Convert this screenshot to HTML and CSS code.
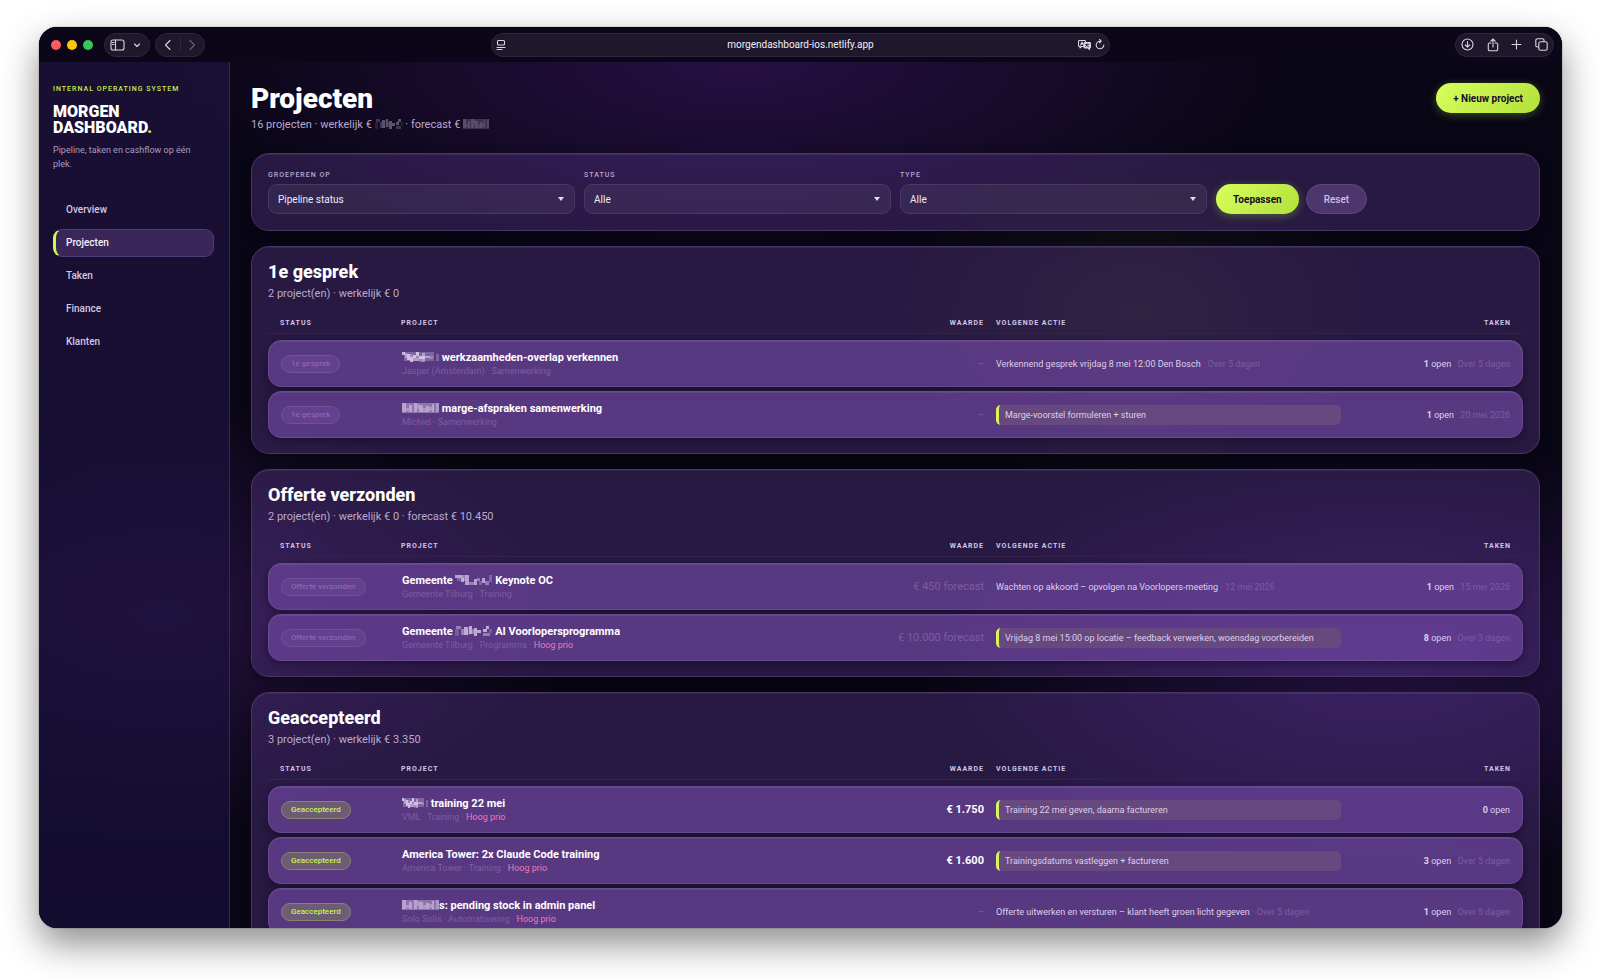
FILE: index.html
```
<!DOCTYPE html>
<html lang="nl">

<head>
    <meta charset="utf-8">
    <title>Morgen Dashboard</title>
    <link rel="stylesheet" href="styles.css">
</head>

<body>
    <!-- shared mosaic blocks for masked names and amounts -->
    <svg class="defs" width="0" height="0" aria-hidden="true">
        <symbol id="mask_a" viewBox="0 0 37 10" preserveAspectRatio="none">
            <path opacity=".25" d="M2 0h30v9h-30z" />
            <path opacity=".7" d="M0 0h3v3h-3zM5 2h3v6h-3zM11 3h3v3h-3zM14 0h3v4h-3zM17 4h6v3h-6zM8 5h3v5h-3z" />
            <path opacity=".45" d="M3 1h2v5h-2zM11 6h6v3h-6zM20 1h3v3h-3zM20 7h3v3h-3zM23 4h5v2h-5z" />
            <path opacity=".25" d="M8 2h3v3h-3zM14 4h3v2h-3zM17 7h3v3h-3zM28 4h3v3h-3zM34 2h3v7h-3z" />
        </symbol>
        <symbol id="mask_b" viewBox="0 0 37 10" preserveAspectRatio="none">
            <path opacity=".35" d="M0 0h37v10h-37z" />
            <path opacity=".4" d="M0 0h4v9h-4zM7 2h3v7h-3zM12 0h3v9h-3zM17 2h4v7h-4zM24 3h3v6h-3zM30 1h2v8h-2z" />
            <path opacity=".3" d="M4 5h3v3h-3zM15 1h2v5h-2zM21 5h3v4h-3zM27 4h3v4h-3zM34 0h3v9h-3z" />
        </symbol>
        <symbol id="mask_c" viewBox="0 0 37 10" preserveAspectRatio="none">
            <path opacity=".6" d="M0 0h8v3h-8zM6 3h3v4h-3zM10 0h4v10h-4zM19 4h3v6h-3zM27 3h3v5h-3z" />
            <path opacity=".4" d="M8 0h2v6h-2zM14 7h5v3h-5zM22 3h3v3h-3zM30 6h4v4h-4z" />
            <path opacity=".25" d="M2 3h4v3h-4zM24 6h3v4h-3zM34 0h3v7h-3z" />
        </symbol>
        <symbol id="mask_d" viewBox="0 0 37 10" preserveAspectRatio="none">
            <path opacity=".65" d="M9 1h4v8h-4zM14 0h3v8h-3zM19 2h3v8h-3zM22 4h4v3h-4zM28 3h4v3h-4zM31 0h3v3h-3z" />
            <path opacity=".4" d="M1 0h5v3h-5zM6 3h3v6h-3zM17 3h2v5h-2zM28 7h7v3h-7z" />
            <path opacity=".2" d="M0 3h4v7h-4zM13 1h1v8h-1zM34 3h3v4h-3z" />
        </symbol>
    </svg>

    <div class="window">
        <div class="toolbar">
            <div class="toolbar_left">
                <div class="lights"><span class="light red"></span><span class="light yellow"></span><span class="light green"></span></div>
                <div class="pill">
                    <button class="icon" aria-label="Zijbalk"><svg width="15" height="12" viewBox="0 0 15 12"><rect x="1" y="1" width="13" height="10" rx="2" /><path d="M5.500 1v10M2.500 3.500h1.500M2.500 5.500h1.500" /></svg></button>
                    <button class="icon" aria-label="Tabgroepen"><svg width="8" height="8" viewBox="0 0 8 8"><path d="M1.500 3l2.500 2.500 2.500-2.500" /></svg></button>
                </div>
                <div class="pill nav_pill">
                    <button class="icon" aria-label="Terug"><svg width="8" height="12" viewBox="0 0 8 12"><path d="M6 1.500L1.500 6 6 10.500" /></svg></button>
                    <span class="divider"></span>
                    <button class="icon dim" aria-label="Vooruit"><svg width="8" height="12" viewBox="0 0 8 12"><path d="M2 1.500L6.500 6 2 10.500" /></svg></button>
                </div>
            </div>
            <div class="pill address">
                <svg width="10" height="12" viewBox="0 0 10 12"><rect x="1.500" y="1.500" width="7" height="4.500" rx="1" /><path d="M1 8.500h8M1 10.500h5" /></svg>
                <span class="url">morgendashboard-ios.netlify.app</span>
                <button class="icon" aria-label="Vertaal"><svg width="13" height="10" viewBox="0 0 13 10"><path d="M7 6.500H3.500L2 8V6.500H1.500a1 1 0 0 1-1-1v-4a1 1 0 0 1 1-1h5a1 1 0 0 1 1 1M2.500 5L4 2l1.500 3M3 4h2" /><path class="solid" d="M7 2.500h4.500a1 1 0 0 1 1 1v3.500a1 1 0 0 1-1 1v1.500L10 8H7a1 1 0 0 1-1-1V3.500a1 1 0 0 1 1-1z" /><path class="cut" d="M7.500 4.500h3.500M9.200 3.800v.7c0 1-.7 1.700-1.500 2M8.200 5c.5 1 1.200 1.500 2.300 1.700" /></svg></button>
                <button class="icon" aria-label="Herlaad"><svg width="10" height="11" viewBox="0 0 10 11"><path d="M8.800 6A3.800 3.800 0 1 1 5 2.200h1M4.500.5L6.200 2.200 4.500 4" /></svg></button>
            </div>
            <div class="toolbar_right">
                <div class="pill tools">
                    <button class="icon" aria-label="Downloads"><svg width="13" height="13" viewBox="0 0 13 13"><circle cx="6.500" cy="6.500" r="5.500" /><path d="M6.500 3.500v5.500M4.300 7l2.200 2.200L8.700 7" /></svg></button>
                    <button class="icon" aria-label="Deel"><svg width="12" height="14" viewBox="0 0 12 14"><path d="M4 5H2.500a1.200 1.200 0 0 0-1.200 1.200v5a1.500 1.500 0 0 0 1.500 1.500h6.400a1.500 1.500 0 0 0 1.500-1.500v-5A1.200 1.200 0 0 0 9.500 5H8M6 9V1.200M3.800 3.200L6 1l2.200 2.200" /></svg></button>
                    <button class="icon" aria-label="Nieuw tabblad"><svg width="11" height="11" viewBox="0 0 11 11"><path d="M5.500 1v9M1 5.500h9" /></svg></button>
                    <button class="icon" aria-label="Tabbladen"><svg width="13" height="13" viewBox="0 0 13 13"><rect x="3.800" y="3.800" width="8.400" height="8.400" rx="1.800" /><path d="M3.500 9H2.300A1.500 1.500 0 0 1 .8 7.500V2.300A1.500 1.500 0 0 1 2.300.8h5.200A1.500 1.500 0 0 1 9 2.300V3.500" /></svg></button>
                </div>
            </div>
        </div>

        <div class="app">
            <aside class="sidebar">
                <div class="eyebrow">INTERNAL OPERATING SYSTEM</div>
                <div class="brand">MORGEN<br>DASHBOARD<span class="dot">.</span></div>
                <p class="tagline">Pipeline, taken en cashflow op één plek.</p>
                <nav class="menu">
                    <a href="#">Overview</a>
                    <a href="#" class="active">Projecten</a>
                    <a href="#">Taken</a>
                    <a href="#">Finance</a>
                    <a href="#">Klanten</a>
                </nav>
            </aside>

            <main class="main">
                <header class="page_header">
                    <div>
                        <h1>Projecten</h1>
                        <p class="subtitle">16 projecten · werkelijk € <svg class="mask faint"><use href="#mask_d" /></svg> · forecast € <svg class="mask faint short"><use href="#mask_b" /></svg></p>
                    </div>
                    <button class="button primary">+ Nieuw project</button>
                </header>

                <form class="panel filters">
                    <div class="field">
                        <label for="group">GROEPEREN OP</label>
                        <select id="group"><option>Pipeline status</option></select>
                    </div>
                    <div class="field">
                        <label for="status">STATUS</label>
                        <select id="status"><option>Alle</option></select>
                    </div>
                    <div class="field">
                        <label for="type">TYPE</label>
                        <select id="type"><option>Alle</option></select>
                    </div>
                    <div class="actions">
                        <button type="button" class="button primary">Toepassen</button>
                        <button type="reset" class="button secondary">Reset</button>
                    </div>
                </form>

                <section class="panel">
                    <h2>1e gesprek</h2>
                    <p class="summary">2 project(en) · werkelijk € 0</p>
                    <table>
                        <thead>
                            <tr><th>STATUS</th><th>PROJECT</th><th class="right">WAARDE</th><th>VOLGENDE ACTIE</th><th class="right">TAKEN</th></tr>
                        </thead>
                        <tbody>
                            <tr>
                                <td><span class="badge">1e gesprek</span></td>
                                <td><div class="name"><svg class="mask"><use href="#mask_a" /></svg> werkzaamheden-overlap verkennen</div><div class="meta">Jasper (Amsterdam) · Samenwerking</div></td>
                                <td class="right muted">–</td>
                                <td>Verkennend gesprek vrijdag 8 mei 12:00 Den Bosch <span class="muted">· Over 5 dagen</span></td>
                                <td class="right"><b>1</b> open <span class="due">Over 5 dagen</span></td>
                            </tr>
                            <tr>
                                <td><span class="badge">1e gesprek</span></td>
                                <td><div class="name"><svg class="mask"><use href="#mask_b" /></svg> marge-afspraken samenwerking</div><div class="meta">Michiel · Samenwerking</div></td>
                                <td class="right muted">–</td>
                                <td><div class="next">Marge-voorstel formuleren + sturen</div></td>
                                <td class="right"><b>1</b> open <span class="due">20 mei 2026</span></td>
                            </tr>
                        </tbody>
                    </table>
                </section>

                <section class="panel">
                    <h2>Offerte verzonden</h2>
                    <p class="summary">2 project(en) · werkelijk € 0 · forecast € 10.450</p>
                    <table>
                        <thead>
                            <tr><th>STATUS</th><th>PROJECT</th><th class="right">WAARDE</th><th>VOLGENDE ACTIE</th><th class="right">TAKEN</th></tr>
                        </thead>
                        <tbody>
                            <tr>
                                <td><span class="badge">Offerte verzonden</span></td>
                                <td><div class="name">Gemeente <svg class="mask"><use href="#mask_c" /></svg> Keynote OC</div><div class="meta">Gemeente Tilburg · Training</div></td>
                                <td class="right muted forecast">€ 450 forecast</td>
                                <td>Wachten op akkoord – opvolgen na Voorlopers-meeting <span class="muted">· 12 mei 2026</span></td>
                                <td class="right"><b>1</b> open <span class="due">15 mei 2026</span></td>
                            </tr>
                            <tr>
                                <td><span class="badge">Offerte verzonden</span></td>
                                <td><div class="name">Gemeente <svg class="mask"><use href="#mask_d" /></svg> AI Voorlopersprogramma</div><div class="meta">Gemeente Tilburg · Programma · <span class="prio">Hoog prio</span></div></td>
                                <td class="right muted forecast">€ 10.000 forecast</td>
                                <td><div class="next">Vrijdag 8 mei 15:00 op locatie – feedback verwerken, woensdag voorbereiden</div></td>
                                <td class="right"><b>8</b> open <span class="due">Over 3 dagen</span></td>
                            </tr>
                        </tbody>
                    </table>
                </section>

                <section class="panel">
                    <h2>Geaccepteerd</h2>
                    <p class="summary">3 project(en) · werkelijk € 3.350</p>
                    <table>
                        <thead>
                            <tr><th>STATUS</th><th>PROJECT</th><th class="right">WAARDE</th><th>VOLGENDE ACTIE</th><th class="right">TAKEN</th></tr>
                        </thead>
                        <tbody>
                            <tr>
                                <td><span class="badge accepted">Geaccepteerd</span></td>
                                <td><div class="name"><svg class="mask short"><use href="#mask_a" /></svg> training 22 mei</div><div class="meta">VML · Training · <span class="prio">Hoog prio</span></div></td>
                                <td class="right value">€ 1.750</td>
                                <td><div class="next">Training 22 mei geven, daarna factureren</div></td>
                                <td class="right"><b>0</b> open</td>
                            </tr>
                            <tr>
                                <td><span class="badge accepted">Geaccepteerd</span></td>
                                <td><div class="name">America Tower: 2x Claude Code training</div><div class="meta">America Tower · Training · <span class="prio">Hoog prio</span></div></td>
                                <td class="right value">€ 1.600</td>
                                <td><div class="next">Trainingsdatums vastleggen + factureren</div></td>
                                <td class="right"><b>3</b> open <span class="due">Over 5 dagen</span></td>
                            </tr>
                            <tr>
                                <td><span class="badge accepted">Geaccepteerd</span></td>
                                <td><div class="name"><svg class="mask"><use href="#mask_b" /></svg>s: pending stock in admin panel</div><div class="meta">Solo Solis · Automatisering · <span class="prio">Hoog prio</span></div></td>
                                <td class="right muted">–</td>
                                <td>Offerte uitwerken en versturen – klant heeft groen licht gegeven <span class="muted">· Over 5 dagen</span></td>
                                <td class="right"><b>1</b> open <span class="due">Over 5 dagen</span></td>
                            </tr>
                        </tbody>
                    </table>
                </section>
            </main>
        </div>
    </div>
</body>

</html>
```
FILE: styles.css
```
* {
    box-sizing: border-box;
}

body {
    margin: 0;
    padding: 27px 38px 51px 39px;
    height: 100vh;
    overflow: hidden;
    background-color: #ffffff;
    color: #ddd0ec;
    font-family: Roboto, "Liberation Sans", sans-serif;
    font-size: 9px;
    line-height: 14px;
}

h1, h2, p {
    margin: 0;
}

button, select {
    font-family: inherit;
}

.defs {
    display: block;
    position: absolute;
}

.window {
    height: 100%;
    display: flex;
    flex-direction: column;
    overflow: hidden;
    border-radius: 18px;
    background-color: #090615;
    box-shadow: 0 0 1px #000000, 0 16px 36px rgba(0, 0, 0, 0.45);
}

/* browser bar */
.toolbar {
    display: grid;
    grid-template-columns: 452fr 618fr 452fr;
    align-items: center;
    flex: none;
    height: 35px;
    background-color: #0c0718;
}

.toolbar_left {
    display: flex;
    align-items: center;
    padding-left: 12px;
}

.toolbar_right {
    display: flex;
    justify-content: flex-end;
    padding-right: 8px;
}

.lights {
    display: flex;
    gap: 6px;
    margin-right: 11px;
}

.light {
    width: 10px;
    height: 10px;
    border-radius: 50%;
}

.red {
    background-color: #ff5b5f;
}

.yellow {
    background-color: #fdc60a;
}

.green {
    background-color: #34c759;
}

.pill {
    display: flex;
    align-items: center;
    justify-content: space-between;
    height: 24px;
    width: 46px;
    padding: 0 8px 0 5px;
    border: 1px solid #2e263e;
    border-radius: 12px;
    background-color: #1f182d;
}

.pill svg {
    display: block;
    fill: none;
    stroke: #d9d5df;
    stroke-width: 1.1;
    stroke-linecap: round;
    stroke-linejoin: round;
}

.pill .solid {
    fill: #d9d5df;
}

.pill .cut {
    stroke: #1f182d;
    stroke-width: 0.8;
}

.icon {
    padding: 0;
    border: 0;
    background: none;
}

.nav_pill {
    width: 50px;
    margin-left: 5px;
    padding: 0 8px;
}

.divider {
    width: 1px;
    height: 14px;
    background-color: #2e263e;
}

.dim {
    opacity: 0.4;
}

.address {
    width: auto;
    gap: 4px;
    padding: 0 4px;
}

/* left padding balances the second icon on the right */
.url {
    flex: 1;
    padding-left: 17px;
    text-align: center;
    color: #f1eff5;
    font-size: 10px;
}

.tools {
    width: 99px;
    padding: 0 5px;
}

/* page */
.app {
    flex: 1;
    min-height: 0;
    display: flex;
    background-image:
        radial-gradient(ellipse 560px 200px at 46% 0, rgba(78, 30, 130, 0.42), transparent),
        radial-gradient(ellipse 260px 170px at 72% 29%, rgba(110, 120, 40, 0.12), transparent),
        radial-gradient(ellipse 460px 220px at 88% 69%, rgba(110, 50, 190, 0.3), transparent),
        radial-gradient(ellipse 420px 220px at 8% 64%, rgba(110, 50, 170, 0.26), transparent);
}

.sidebar {
    flex: none;
    width: 191px;
    padding: 22px 15px 0 14px;
    border-right: 1px solid #382654;
    background-image: linear-gradient(rgba(34, 20, 68, 0.65), rgba(24, 16, 60, 0.65));
}

.eyebrow {
    color: #c8ee50;
    font-size: 7px;
    font-weight: 500;
    letter-spacing: 1px;
    line-height: 10px;
    white-space: nowrap;
}

.brand {
    margin-top: 10px;
    color: #ffffff;
    font-size: 16px;
    font-weight: 900;
    line-height: 16px;
}

.dot {
    color: #d4ff4f;
}

.tagline {
    margin-top: 7px;
    padding-right: 14px;
    color: #a99bc0;
}

.menu {
    display: flex;
    flex-direction: column;
    gap: 5px;
    margin-top: 25px;
}

.menu a {
    height: 28px;
    padding-left: 12px;
    border: 1px solid transparent;
    border-radius: 9px;
    color: #d3c7e6;
    font-size: 10px;
    font-weight: 500;
    line-height: 26px;
    text-decoration: none;
}

.menu .active {
    padding-left: 10px;
    border-color: #523a73;
    border-left: 3px solid #d0f850;
    background-color: #3b2659;
    color: #f5effc;
}

.main {
    flex: 1;
    min-width: 0;
    overflow: hidden;
    padding: 21px 22px 0 21px;
}

.page_header {
    display: flex;
    justify-content: space-between;
    align-items: flex-start;
    margin-bottom: 20px;
}

h1 {
    color: #ffffff;
    font-size: 28px;
    font-weight: 900;
    line-height: 32px;
}

.subtitle, .summary {
    color: #b9aacd;
    font-size: 11px;
    line-height: 16px;
}

.subtitle {
    margin-top: 2px;
}

.mask {
    display: inline-block;
    width: 37px;
    height: 10px;
    fill: #f3e9ff;
    vertical-align: -1px;
    shape-rendering: crispEdges;
}

.short {
    width: 26px;
}

.faint {
    opacity: 0.5;
}

.faint:not(.short) {
    width: 28px;
}

.button {
    height: 30px;
    padding: 0 17px;
    border: 0;
    border-radius: 15px;
    font-size: 10px;
    font-weight: 700;
}

.primary {
    background-image: linear-gradient(135deg, #d8ff5c, #b2e03c);
    color: #160c26;
    box-shadow: 0 2px 10px rgba(200, 255, 70, 0.28);
}

.secondary {
    border: 1px solid #604583;
    background-color: #4d356d;
    color: #cdbfe0;
    font-weight: 500;
}

.panel {
    margin-bottom: 15px;
    padding: 16px 16px 15px;
    border: 1px solid #493563;
    border-radius: 18px;
    background-color: rgba(110, 70, 170, 0.3);
    box-shadow: inset 0 1px rgba(255, 255, 255, 0.07), 0 6px 14px rgba(0, 0, 0, 0.3);
}

.filters {
    display: grid;
    grid-template-columns: 1fr 1fr 1fr 307px;
    gap: 9px;
    align-items: end;
    padding-bottom: 16px;
}

.field label {
    display: block;
    margin-bottom: 4px;
    color: #b9a9d0;
    font-size: 7px;
    font-weight: 500;
    letter-spacing: 1px;
    line-height: 10px;
}

.field select {
    display: block;
    width: 100%;
    height: 30px;
    padding: 0 9px;
    appearance: none;
    border: 1px solid #4b3964;
    border-radius: 9px;
    background: rgba(255, 255, 255, 0.06) url("data:image/svg+xml,%3Csvg xmlns='http://www.w3.org/2000/svg' width='6' height='4'%3E%3Cpath d='M0 0h6L3 4z' fill='%23e6dcf5'/%3E%3C/svg%3E") no-repeat right 10px center;
    color: #efe7fa;
    font-size: 10px;
}

.actions {
    display: flex;
    gap: 7px;
}

h2 {
    color: #ffffff;
    font-size: 18px;
    font-weight: 800;
    line-height: 18px;
}

.summary {
    margin: 5px 0 11px;
}

/* rows are cards, so the table parts are laid out as grids */
table, thead, tbody {
    display: block;
}

tr {
    display: grid;
    grid-template-columns: 109px 450fr 120fr 345fr 157fr;
    gap: 12px;
    align-items: center;
    padding: 0 12px;
}

th, td {
    min-width: 0;
    padding: 0;
    text-align: left;
}

th {
    color: #d3c5e6;
    font-size: 7px;
    font-weight: 700;
    letter-spacing: 1px;
    line-height: 10px;
}

thead tr {
    padding: 5px 12px;
    border-bottom: 1px solid #35234f;
}

tbody {
    padding-top: 6px;
}

tbody tr {
    height: 47px;
    margin-bottom: 4px;
    border: 1px solid #6a4b92;
    border-radius: 13px;
    background-color: rgba(118, 74, 168, 0.64);
    box-shadow: inset 0 1px rgba(255, 255, 255, 0.08), 0 3px 8px rgba(8, 3, 20, 0.4);
}

tbody tr:last-child {
    margin-bottom: 0;
}

.right {
    text-align: right;
}

.name {
    color: #ffffff;
    font-size: 11px;
    font-weight: 700;
    white-space: nowrap;
}

.meta {
    color: #7c5d9f;
    line-height: 12px;
}

.prio {
    color: #e67cba;
}

.muted, .due {
    color: #7c5d9f;
}

.due {
    margin-left: 4px;
}

.forecast, .value {
    font-size: 11px;
}

.value {
    color: #ffffff;
    font-weight: 700;
}

.badge {
    display: inline-block;
    height: 18px;
    padding: 0 9px;
    border: 1px solid #72519b;
    border-radius: 9px;
    background-color: #63418c;
    color: #8d64ba;
    font-size: 8px;
    font-weight: 500;
    line-height: 16px;
}

.accepted {
    border-color: #8c8372;
    background-color: #6c5d75;
    color: #cdf252;
}

.next {
    height: 20px;
    padding-left: 6px;
    border-left: 3px solid #d8f55c;
    border-radius: 5px;
    background-color: #67497f;
    line-height: 20px;
    white-space: nowrap;
}
```
